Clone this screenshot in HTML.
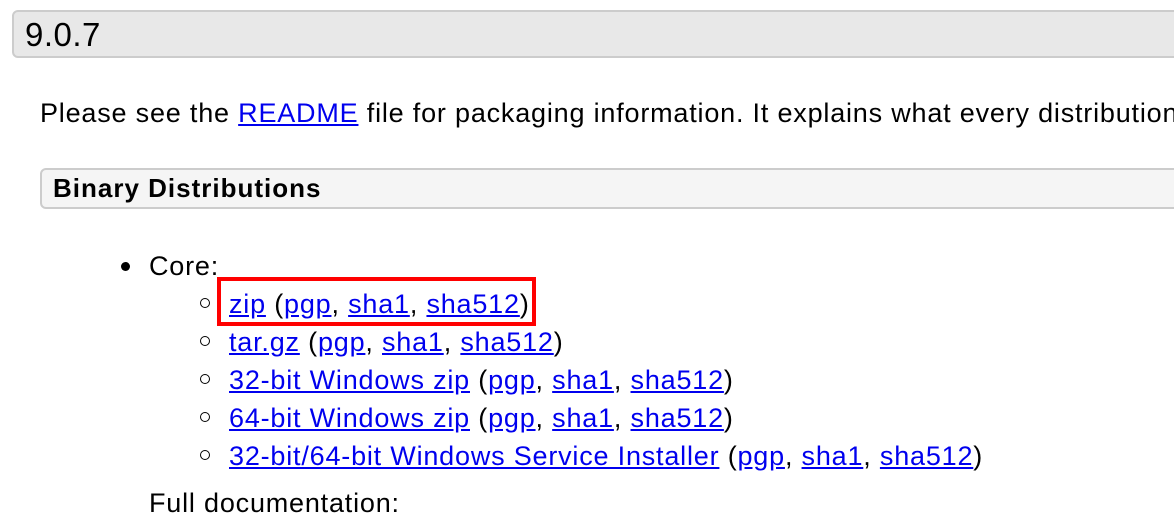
<!DOCTYPE html>
<html><head><meta charset="utf-8"><style>
body{margin:0;width:1174px;height:487px;overflow:hidden;background:#fff;font-family:"Liberation Sans",sans-serif;color:#000;position:relative}
.l{position:absolute;white-space:nowrap;font-size:27px;line-height:38px;letter-spacing:0.8px}
a{color:#0000ee;text-decoration:underline}
.box{position:absolute;border:2px solid #ccc;border-radius:6px;box-sizing:border-box}
.dot{position:absolute;width:9px;height:9px;border-radius:50%;background:#000}
.circ{position:absolute;width:8px;height:8px;border-radius:50%;border:1.5px solid #000}
</style></head><body>
<div class="box" style="left:12px;top:10px;width:1200px;height:48px;background:#e8e8e8"></div>
<div class="l" style="left:25px;top:15px;font-size:33px;line-height:40px;letter-spacing:0.5px">9.0.7</div>
<div class="l" style="left:40px;top:94px">Please see the <a>README</a> file for packaging information. It explains what every distribution</div>
<div class="box" style="left:40px;top:168px;width:1200px;height:41px;background:#f5f5f5"></div>
<div class="l" style="left:53px;top:169px;font-weight:bold;font-size:26px;letter-spacing:1px">Binary Distributions</div>
<div class="dot" style="left:121px;top:262px"></div>
<div class="l" style="left:149px;top:247px">Core:</div>
<div class="circ" style="left:200px;top:298px"></div>
<div class="circ" style="left:200px;top:336px"></div>
<div class="circ" style="left:200px;top:374px"></div>
<div class="circ" style="left:200px;top:412px"></div>
<div class="circ" style="left:200px;top:450px"></div>
<div class="l" style="left:229px;top:285px"><a>zip</a> (<a>pgp</a>, <a>sha1</a>, <a>sha512</a>)</div>
<div class="l" style="left:229px;top:323px"><a>tar.gz</a> (<a>pgp</a>, <a>sha1</a>, <a>sha512</a>)</div>
<div class="l" style="left:229px;top:361px"><a>32-bit Windows zip</a> (<a>pgp</a>, <a>sha1</a>, <a>sha512</a>)</div>
<div class="l" style="left:229px;top:399px"><a>64-bit Windows zip</a> (<a>pgp</a>, <a>sha1</a>, <a>sha512</a>)</div>
<div class="l" style="left:229px;top:437px"><a>32-bit/64-bit Windows Service Installer</a> (<a>pgp</a>, <a>sha1</a>, <a>sha512</a>)</div>
<div class="l" style="left:149px;top:484px">Full documentation:</div>
<div style="position:absolute;left:217px;top:277px;width:319px;height:49px;border:4px solid #f00;box-sizing:border-box"></div>
</body></html>
